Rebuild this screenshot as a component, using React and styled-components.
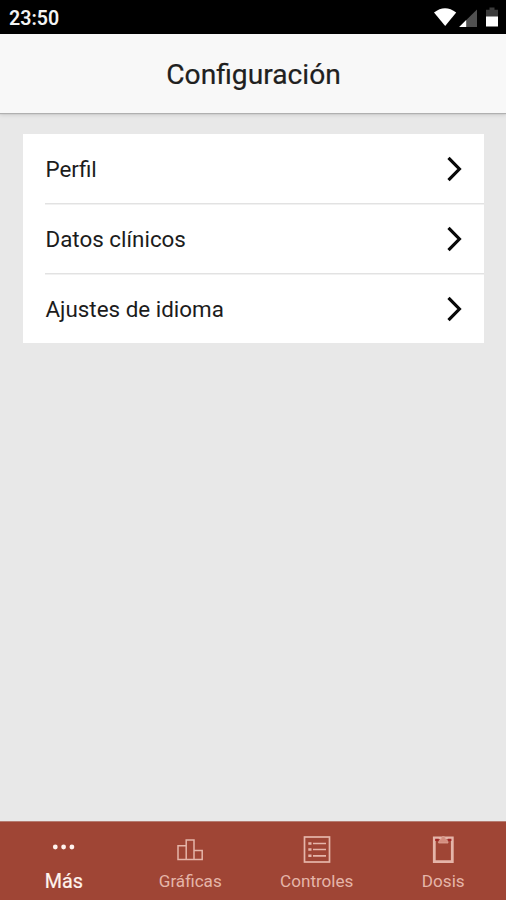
import React from "react";
import styled, { createGlobalStyle } from "styled-components";

const GlobalStyle = createGlobalStyle`
  * { box-sizing: border-box; }
  body { margin: 0; background: #e8e8e8; font-family: Roboto, sans-serif; }
`;

const Screen = styled.div`
  display: flex;
  flex-direction: column;
  height: 900px;
  background: #e8e8e8;
`;

const StatusBar = styled.div`
  display: flex;
  align-items: center;
  justify-content: space-between;
  height: 34px;
  padding: 2px 8px 0 9px;
  background: #000;
  color: #f4f4f4;
`;

const Clock = styled.span`
  padding-top: 2px;
  font-size: 19.6px;
  font-weight: 600;
  line-height: 30px;
`;

const StatusIcons = styled.svg`
  display: block;
  width: 66px;
  height: 32px;
`;

const Header = styled.header`
  position: relative;
  display: flex;
  align-items: center;
  justify-content: center;
  height: 79px;
  background: #f8f8f8;
  box-shadow: 0 1px 1px #b0b0b0, 0 2px 4px rgba(0, 0, 0, 0.12);
`;

const Title = styled.h1`
  margin: 0;
  padding: 2px 0 0 1px;
  font-size: 28.2px;
  font-weight: 400;
  line-height: 36px;
  color: #202020;
  -webkit-text-stroke: 0.2px #202020;
`;

const Content = styled.main`
  flex: 1;
  padding: 21px 22px 0 23px;
`;

const List = styled.ul`
  margin: 0;
  padding: 0 0 0 22px;
  list-style: none;
  background: #fff;
`;

const Row = styled.li`
  display: flex;
  align-items: center;
  justify-content: space-between;
  height: ${(p) => (p.$last ? 69 : 70)}px;
  padding: ${(p) => (p.$last ? 1 : 0)}px 22px 0 0.5px;
  box-shadow: ${(p) => (p.$last ? "none" : "0 0.5px 0 #e2e2e2, inset 0 -1px 0 #e2e2e2")};
`;

const RowLabel = styled.span`
  font-size: 22.4px;
  font-weight: 400;
  line-height: 30px;
  color: #1c1c1c;
`;

const Chevron = styled.svg`
  display: block;
  width: 15px;
  height: 26px;
`;

const TabBar = styled.nav`
  display: grid;
  grid-template-columns: repeat(4, 1fr);
  height: 79px;
  border-top: 1px solid #b57b70;
  background: #9f4535;
`;

const Tab = styled.button`
  display: flex;
  flex-direction: column;
  align-items: center;
  padding: 10px 0 0 1px;
  border: 0;
  background: none;
  font-family: inherit;
  color: ${(p) => (p.$active ? "#fff4ef" : "#e5b5a9")};
`;

const TabIcon = styled.svg`
  display: block;
  width: 32px;
  height: 32px;
`;

const TabLabel = styled.span`
  margin-top: ${(p) => (p.$active ? 6 : 5)}px;
  font-size: ${(p) => (p.$active ? 19.8 : 17.1)}px;
  font-weight: 400;
  line-height: 24px;
  -webkit-text-stroke: ${(p) => (p.$active ? "0.2px currentColor" : "0")};
`;

const DotsIcon = () => (
  <TabIcon viewBox="0 0 32 32" fill="currentColor">
    <circle cx="7.3" cy="15" r="2.4" />
    <circle cx="15.6" cy="15" r="2.4" />
    <circle cx="23.9" cy="15" r="2.4" />
  </TabIcon>
);

const ChartIcon = () => (
  <TabIcon viewBox="0 0 32 32" fill="none" stroke="currentColor" strokeWidth="1.5">
    <path d="M4 27.5V13.7h8.2M12.2 27.5V8h7.8v19.5M20 18.4h8.2v9.1H4V26.8" />
  </TabIcon>
);

const ListIcon = () => (
  <TabIcon viewBox="0 0 32 32" fill="none" stroke="currentColor" strokeWidth="1.7">
    <rect x="3.5" y="5" width="25" height="25" />
    <path d="M12 11.5h13M12 17.5h13M12 23.8h13" />
    <path d="M7.3 11.5h3.2M7.3 17.5h3.2M7.3 23.8h3.2" strokeWidth="2.5" />
  </TabIcon>
);

const ClipboardIcon = () => (
  <TabIcon viewBox="0 0 32 32">
    <path d="M7.3 5.8h18v23.9h-18z" fill="none" stroke="currentColor" strokeWidth="2.8" />
    <path d="M8.2 7.8h3.6M20.8 7.8h3.6" stroke="#9f2525" strokeWidth="2.2" />
    <path d="M11.6 11c0-2 1.1-3.2 2.4-3.7.2-1.6.9-2.7 2.3-2.7s2.1 1.1 2.3 2.7c1.3.5 2.4 1.7 2.4 3.7z" fill="#d38d7e" stroke="#dfa598" strokeWidth="0.8" />
  </TabIcon>
);

const rows = ["Perfil", "Datos clínicos", "Ajustes de idioma"];

const tabs = [
  { label: "Más", Icon: DotsIcon, active: true },
  { label: "Gráficas", Icon: ChartIcon },
  { label: "Controles", Icon: ListIcon },
  { label: "Dosis", Icon: ClipboardIcon },
];

export default function App() {
  return (
    <Screen>
      <GlobalStyle />
      <StatusBar>
        <Clock>23:50</Clock>
        <StatusIcons viewBox="432 2 66 32">
          <path d="M434 12.5Q445 4 456.2 12.5L445.2 26Z" fill="#fff" />
          <path d="M477 9.5V27H459.2Z" fill="#505050" />
          <path d="M466.2 20.1V27H459.2Z" fill="#fff" />
          <path d="M489.5 7.5h5v2.3H498V17H486V9.8h3.5z" fill="#3c3c3c" />
          <path d="M486 16.5h12v10h-12z" fill="#fff" />
        </StatusIcons>
      </StatusBar>
      <Header>
        <Title>Configuración</Title>
      </Header>
      <Content>
        <List>
          {rows.map((label, i) => (
            <Row key={label} $last={i === rows.length - 1}>
              <RowLabel>{label}</RowLabel>
              <Chevron viewBox="0 0 15 26" fill="none" stroke="#080808" strokeWidth="3.2">
                <path d="M1.5 1.8L12.4 13 1.5 24.2" />
              </Chevron>
            </Row>
          ))}
        </List>
      </Content>
      <TabBar>
        {tabs.map(({ label, Icon, active }) => (
          <Tab key={label} $active={active}>
            <Icon />
            <TabLabel $active={active}>{label}</TabLabel>
          </Tab>
        ))}
      </TabBar>
    </Screen>
  );
}
